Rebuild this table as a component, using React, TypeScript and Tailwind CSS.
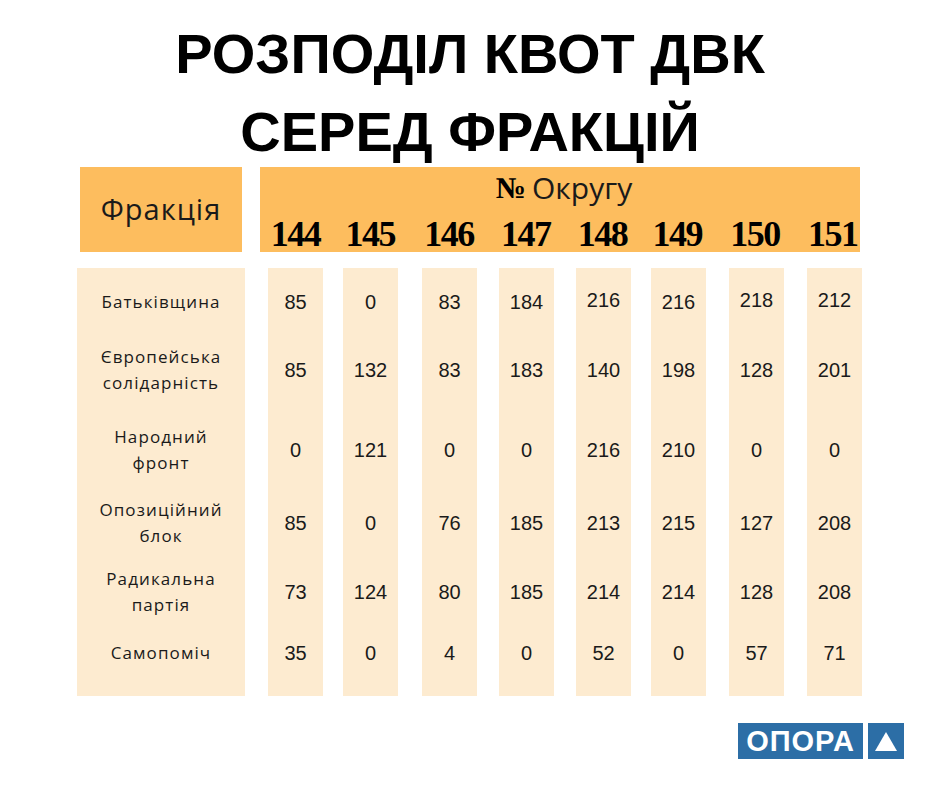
import React from 'react';

const districts = ['144', '145', '146', '147', '148', '149', '150', '151'];

// left margin of every number column (px gaps as in the picture)
const colGaps = ['ml-[23px]', 'ml-[20px]', 'ml-[24px]', 'ml-[22px]', 'ml-[22px]', 'ml-[20px]', 'ml-[23px]', 'ml-[23px]'];
const headGaps = ['ml-[8px]', 'ml-[20px]', 'ml-[24px]', 'ml-[22px]', 'ml-[22px]', 'ml-[20px]', 'ml-[23px]', 'ml-[23px]'];

const rowHeights = ['h-[68px]', 'h-[68px]', 'h-[92px]', 'h-[54px]', 'h-[84px]', 'h-[38px]'];

const factions = [
  ['Батьківщина'],
  ['Європейська', 'солідарність'],
  ['Народний', 'фронт'],
  ['Опозиційний', 'блок'],
  ['Радикальна', 'партія'],
  ['Самопоміч'],
];

const values = [
  [85, 0, 83, 184, 216, 216, 218, 212],
  [85, 132, 83, 183, 140, 198, 128, 201],
  [0, 121, 0, 0, 216, 210, 0, 0],
  [85, 0, 76, 185, 213, 215, 127, 208],
  [73, 124, 80, 185, 214, 214, 128, 208],
  [35, 0, 4, 0, 52, 0, 57, 71],
];

export default function App() {
  return (
    <div className="w-[940px] h-[788px] bg-white relative overflow-hidden">
      {/* Заголовок */}
      <div className="h-[167px] pt-[15px] text-center">
        <h1 className="font-['Liberation_Sans',Arial,sans-serif] font-bold text-[56px] leading-[78px] text-black">
          РОЗПОДІЛ КВОТ ДВК
          <br />
          СЕРЕД ФРАКЦІЙ
        </h1>
      </div>

      {/* Шапка таблиці */}
      <div className="flex">
        <div className="ml-[80px] w-[162px] h-[85px] bg-[#fdbd5e] flex items-center justify-center">
          <span className="font-['Open_Sans',sans-serif] text-[29px] tracking-[1px] text-[#1a1a1a] -mt-[2px]">Фракція</span>
        </div>
        <div className="ml-[18px] w-[600px] h-[85px] bg-[#fdbd5e] flex flex-col">
          <div className="h-[40px] flex items-center justify-center pl-[8px]">
            <span className="font-['Liberation_Serif',serif] font-bold text-[30px] text-black mr-[6px]">№</span>
            <span className="font-['Open_Sans',sans-serif] text-[30px] text-[#1a1a1a]">Округу</span>
          </div>
          <div className="flex mt-[11px]">
            {districts.map((d, i) => (
              <div
                key={d}
                className={`${headGaps[i]} w-[55px] text-center font-['Liberation_Serif',serif] font-bold text-[36px] leading-[32px] tracking-[-1.5px] text-black`}
              >
                {d}
              </div>
            ))}
          </div>
        </div>
      </div>

      {/* Тіло таблиці */}
      <div className="flex mt-[16px]">
        <div className="ml-[77px] w-[168px] bg-[#fdebd0] pb-[24px]">
          {factions.map((lines, r) => (
            <div
              key={r}
              className={`${rowHeights[r]} flex flex-col items-center justify-center text-center font-['Open_Sans',sans-serif] text-[17px] leading-[26px] tracking-[1.1px] text-[#1a1a1a]`}
            >
              {lines.map((l) => (
                <span key={l}>{l}</span>
              ))}
            </div>
          ))}
        </div>
        {districts.map((d, c) => (
          <div key={d} className={`${colGaps[c]} w-[55px] bg-[#fdebd0] pb-[24px]`}>
            {values.map((row, r) => (
              <div
                key={r}
                className={`${rowHeights[r]} flex items-center justify-center font-['Liberation_Sans',Arial,sans-serif] text-[20px] text-[#1a1a1a]`}
              >
                <span className={r === 0 && (c === 4 || c === 6 || c === 7) ? '-translate-y-[2px]' : ''}>{row[c]}</span>
              </div>
            ))}
          </div>
        ))}
      </div>

      {/* Логотип */}
      <div className="flex justify-end mt-[27px] pr-[36px]">
        <div className="w-[125px] h-[36px] bg-[#2c6ea6] flex items-center justify-center">
          <span className="font-['Liberation_Sans',Arial,sans-serif] font-bold text-[29px] leading-none tracking-[1px] text-white">ОПОРА</span>
        </div>
        <div className="ml-[5px] w-[36px] h-[36px] bg-[#2c6ea6] flex items-center justify-center">
          <svg width="22" height="19" viewBox="0 0 22 19">
            <polygon points="11,0 22,19 0,19" fill="#ffffff" />
          </svg>
        </div>
      </div>
    </div>
  );
}
